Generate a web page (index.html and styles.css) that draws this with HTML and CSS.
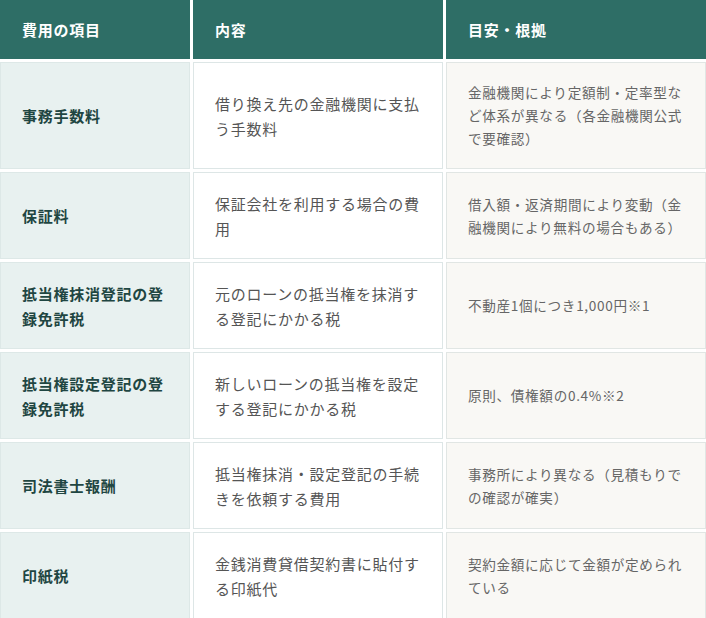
FILE: index.html
```html
<!DOCTYPE html>
<html lang="ja">
<head>
<meta charset="utf-8">
<title>費用の項目</title>
<link rel="stylesheet" href="styles.css">
</head>
<body>
<table class="cost-table">
  <colgroup>
    <col class="c-item">
    <col class="c-desc">
    <col class="c-note">
  </colgroup>
  <thead>
    <tr class="head-row">
      <th>費用の項目</th>
      <th>内容</th>
      <th>目安・根拠</th>
    </tr>
  </thead>
  <tbody>
    <tr class="row-tall">
      <th class="item">事務手数料</th>
      <td class="desc">借り換え先の金融機関に支払う手数料</td>
      <td class="note">金融機関により定額制・定率型など体系が異なる（各金融機関公式で要確認）</td>
    </tr>
    <tr class="row">
      <th class="item">保証料</th>
      <td class="desc">保証会社を利用する場合の費用</td>
      <td class="note">借入額・返済期間により変動（金融機関により無料の場合もある）</td>
    </tr>
    <tr class="row">
      <th class="item">抵当権抹消登記の登録免許税</th>
      <td class="desc">元のローンの抵当権を抹消する登記にかかる税</td>
      <td class="note">不動産1個につき1,000円※1</td>
    </tr>
    <tr class="row">
      <th class="item">抵当権設定登記の登録免許税</th>
      <td class="desc">新しいローンの抵当権を設定する登記にかかる税</td>
      <td class="note">原則、債権額の0.4%※2</td>
    </tr>
    <tr class="row">
      <th class="item">司法書士報酬</th>
      <td class="desc">抵当権抹消・設定登記の手続きを依頼する費用</td>
      <td class="note">事務所により異なる（見積もりでの確認が確実）</td>
    </tr>
    <tr class="row">
      <th class="item">印紙税</th>
      <td class="desc">金銭消費貸借契約書に貼付する印紙代</td>
      <td class="note">契約金額に応じて金額が定められている</td>
    </tr>
  </tbody>
</table>
</body>
</html>
```
FILE: styles.css
```css
html, body {
  margin: 0;
  padding: 0;
  background: #ffffff;
}

body {
  font-family: "Noto Sans CJK JP", "Noto Sans", sans-serif;
  overflow: hidden;
}

.cost-table {
  border-collapse: separate;
  border-spacing: 3px;
  margin: -3px;
  width: 712px;
  table-layout: fixed;
}

.c-item { width: 190px; }
.c-desc { width: 250px; }
.c-note { width: 260px; }

.cost-table th,
.cost-table td {
  box-sizing: border-box;
  vertical-align: middle;
  text-align: left;
  padding: 8px 20px 8px 21px;
  letter-spacing: 0.05em;
}

.head-row { height: 59px; }

.head-row th {
  background: #2e6e66;
  color: #ffffff;
  font-size: 15px;
  font-weight: 700;
  line-height: 25px;
  border: 1px solid #2e6e66;
}

.row-tall { height: 107px; }
.row { height: 87px; }

.item {
  background: #e8f1f0;
  color: #1f4642;
  font-size: 15px;
  font-weight: 700;
  line-height: 25px;
  border: 1px solid #dde8e7;
}

.desc {
  background: #ffffff;
  color: #555555;
  font-size: 15px;
  font-weight: 400;
  line-height: 25px;
  border: 1px solid #dde6e6;
}

.note {
  background: #f9f8f5;
  color: #666666;
  font-size: 13.6px;
  font-weight: 400;
  line-height: 23px;
  border: 1px solid #e1e6e4;
}
```
